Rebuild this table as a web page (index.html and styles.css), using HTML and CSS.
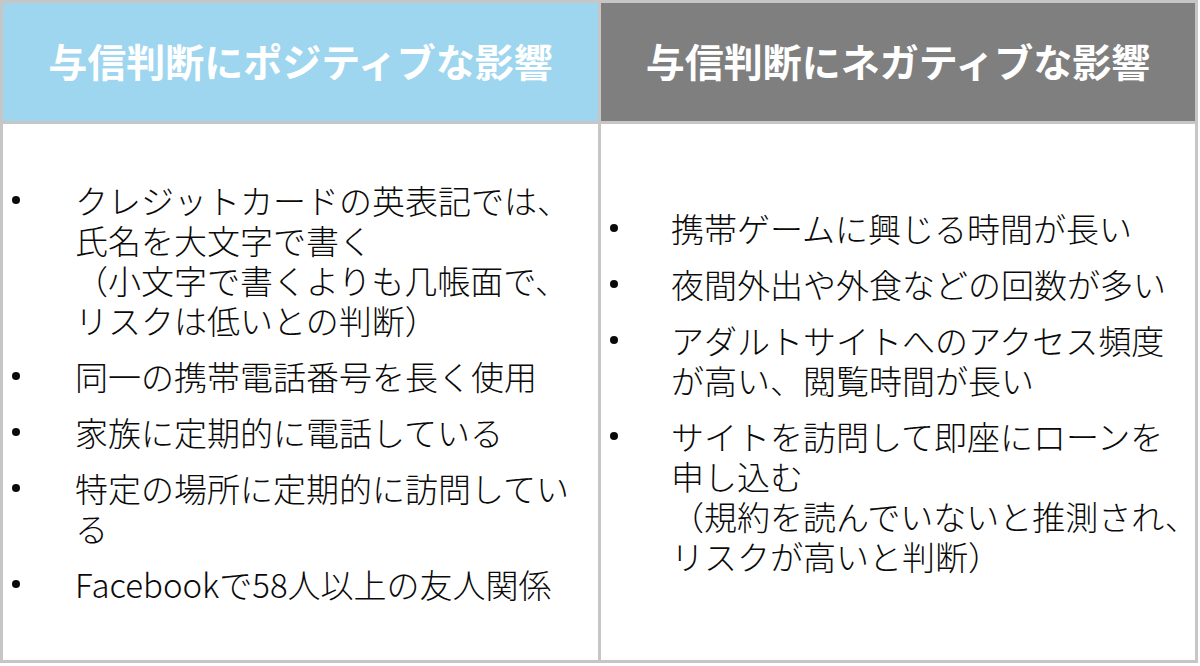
FILE: index.html
```html
<!DOCTYPE html>
<html lang="ja">
<head>
<meta charset="utf-8">
<title>与信判断への影響</title>
<link rel="stylesheet" href="styles.css">
</head>
<body>
<div class="table">
  <div class="head head-pos">与信判断にポジティブな影響</div>
  <div class="head head-neg">与信判断にネガティブな影響</div>
  <div class="cell cell-left">
    <ul class="list">
      <li class="item"><span class="line">クレジットカードの英表記では、</span><span class="line">氏名を大文字で書く</span><span class="line">（小文字で書くよりも几帳面で、</span><span class="line">リスクは低いとの判断）</span></li>
      <li class="item"><span class="line">同一の携帯電話番号を長く使用</span></li>
      <li class="item"><span class="line">家族に定期的に電話している</span></li>
      <li class="item"><span class="line">特定の場所に定期的に訪問してい</span><span class="line">る</span></li>
      <li class="item"><span class="line">Facebookで58人以上の友人関係</span></li>
    </ul>
  </div>
  <div class="cell cell-right">
    <ul class="list">
      <li class="item"><span class="line">携帯ゲームに興じる時間が長い</span></li>
      <li class="item"><span class="line">夜間外出や外食などの回数が多い</span></li>
      <li class="item"><span class="line">アダルトサイトへのアクセス頻度</span><span class="line">が高い、閲覧時間が長い</span></li>
      <li class="item"><span class="line">サイトを訪問して即座にローンを</span><span class="line">申し込む</span><span class="line">（規約を読んでいないと推測され、</span><span class="line">リスクが高いと判断）</span></li>
    </ul>
  </div>
</div>
</body>
</html>
```

FILE: styles.css
```css
html, body {
  margin: 0;
  padding: 0;
  background: #ffffff;
}

body {
  width: 1200px;
  height: 666px;
  overflow: hidden;
  font-family: "Noto Sans CJK JP", "Noto Sans", sans-serif;
}

.table {
  width: 1198px;
  height: 663px;
  box-sizing: border-box;
  padding: 3px;
  background: #c6c6c6;
  display: grid;
  grid-template-columns: 595px 594px;
  grid-template-rows: 118px 536px;
  gap: 3px;
}

.head {
  display: flex;
  align-items: center;
  justify-content: center;
  color: #ffffff;
  font-weight: 700;
  font-size: 39px;
  line-height: 1;
  padding-bottom: 4px;
  box-sizing: border-box;
}

.head-pos {
  background: #9dd6ee;
}

.head-neg {
  background: #7f7f7f;
}

.cell {
  background: #ffffff;
  display: flex;
  align-items: center;
  overflow: visible;
  min-width: 0;
}

.list {
  list-style: none;
  margin: 0;
  padding: 0;
  display: flex;
  flex-direction: column;
  gap: 16px;
  color: #0a0a0a;
  font-size: 33px;
  font-weight: 300;
  line-height: 40px;
}

.item {
  position: relative;
  white-space: nowrap;
  display: flex;
  flex-direction: column;
}

.line {
  display: block;
  height: 40px;
}

.item::before {
  content: "";
  position: absolute;
  top: 16px;
  width: 8px;
  height: 8px;
  border-radius: 50%;
  background: #0a0a0a;
}

.cell-left .item {
  padding-left: 72px;
}

.cell-left .item::before {
  left: 9px;
}

.cell-right .item {
  padding-left: 70px;
}

.cell-right .item::before {
  left: 9px;
}
```
